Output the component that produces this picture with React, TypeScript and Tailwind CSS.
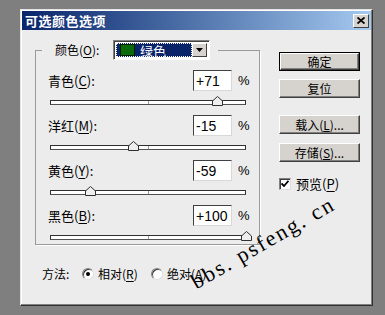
import React from 'react';

const FONT = { fontFamily: '"Noto Sans CJK SC", "Liberation Sans", sans-serif' };

const channels = [
  { name: '青色', key: 'C', value: 71 },
  { name: '洋红', key: 'M', value: -15 },
  { name: '黄色', key: 'Y', value: -59 },
  { name: '黑色', key: 'B', value: 100 },
];

function Hotkey({ label, k, colon = true }: { label: string; k: string; colon?: boolean }) {
  return (
    <span>
      {label}(<span className="underline underline-offset-2">{k}</span>){colon ? ':' : ''}
    </span>
  );
}

function WinButton({ children, isDefault }: { children: React.ReactNode; isDefault?: boolean }) {
  return (
    <div className={`w-[81px] h-[19px] ${isDefault ? 'border border-black' : ''}`}>
      <div className="w-full h-full bg-[#d6d3ce] border border-t-white border-l-white border-r-[#404040] border-b-[#404040] shadow-[inset_-1px_-1px_0_#808080] flex items-center justify-center text-[12px] text-black leading-none">
        {children}
      </div>
    </div>
  );
}

function Slider({ value }: { value: number }) {
  const pos = ((value + 100) / 200) * 196;
  return (
    <div className="relative h-[12px] w-[196px] ml-[2px] mt-[4px]">
      <div className="absolute top-[5px] left-0 w-[196px] h-[5px] bg-white border border-[#303030] border-b-[#505050]">
        <div className="absolute left-[97px] top-0 w-px h-full bg-[#9a9a9a]" />
      </div>
      <svg className="absolute top-[1px]" style={{ left: pos - 5.5 }} width="11" height="10" viewBox="0 0 11 10">
        <polygon points="0.5,9.5 0.5,5 5.5,0.5 10.5,5 10.5,9.5" fill="#eeeeee" stroke="#303030" strokeWidth="1" />
      </svg>
    </div>
  );
}

function Radio({ checked }: { checked?: boolean }) {
  return (
    <div className="w-[12px] h-[12px] rounded-full bg-white border border-t-[#808080] border-l-[#808080] border-r-[#e0e0e0] border-b-[#e0e0e0] shadow-[inset_1px_1px_0_#404040] flex items-center justify-center">
      {checked && <div className="w-[4px] h-[4px] rounded-full bg-black" />}
    </div>
  );
}

export default function App() {
  return (
    <div className="relative w-[385px] h-[315px] overflow-hidden bg-[#7f7f7f] pl-[20px] pt-[9px]" style={FONT}>
      <div className="w-[353px] h-[297px] bg-[#ececec] border border-t-[#e4e4e4] border-l-[#e4e4e4] border-r-[#303030] border-b-[#303030] shadow-[inset_-1px_-1px_0_#808080,inset_1px_1px_0_#ffffff] p-[1px]">
        <div className="h-[19px] bg-gradient-to-r from-[#0a246a] to-[#a6caf0] flex items-center justify-between pl-[3px] pr-[2px]">
          <span className="text-white font-bold text-[13px] leading-none tracking-[0.5px]">可选颜色选项</span>
          <div className="w-[16px] h-[14px] bg-[#d6d3ce] border border-t-white border-l-white border-r-[#404040] border-b-[#404040] flex items-center justify-center">
            <svg width="8" height="7" viewBox="0 0 8 7">
              <path d="M0.5 0.5 L7.5 6.5 M7.5 0.5 L0.5 6.5" stroke="#000" strokeWidth="1.8" />
            </svg>
          </div>
        </div>

        <div className="flex mt-[10px] ml-[13px]">
          <div className="flex flex-col">
            <fieldset className="w-[225px] h-[205px] border border-[#9a9a9a] shadow-[1px_1px_0_#ffffff] pl-[12px]">
              <legend className="-ml-[6px] pl-[13px] pr-[8px] flex items-center h-[20px]">
                <span className="w-[58px] text-[12px] text-black leading-none">
                  <Hotkey label="颜色" k="O" />
                </span>
                <div className="w-[97px] h-[20px] bg-white border border-t-[#808080] border-l-[#808080] border-r-white border-b-white shadow-[inset_1px_1px_0_#404040] flex items-center p-[2px]">
                  <div className="flex-1 h-full bg-[#0a246a] border border-dotted border-white flex items-center pl-[3px]">
                    <div className="w-[15px] h-[12px] bg-[#0b6b0b] border border-[#002000]" />
                    <span className="ml-[5px] text-white text-[13px] leading-none">绿色</span>
                  </div>
                  <div className="w-[15px] h-full bg-[#d6d3ce] border border-t-white border-l-white border-r-[#404040] border-b-[#404040] flex items-center justify-center">
                    <svg width="7" height="4" viewBox="0 0 7 4">
                      <polygon points="0,0 7,0 3.5,4" fill="#000" />
                    </svg>
                  </div>
                </div>
              </legend>

              <div className="mt-[10px]">
                {channels.map(c => (
                  <div key={c.key} className="h-[45px]">
                    <div className="flex items-center h-[21px]">
                      <span className="w-[145px] text-[13px] text-black leading-none">
                        <Hotkey label={c.name} k={c.key} />
                      </span>
                      <div className="w-[39px] h-[21px] bg-white border border-t-[#404040] border-l-[#404040] border-r-[#d8d8d8] border-b-[#d8d8d8] flex items-center pl-[2px] text-[14px] text-black leading-none" style={{ fontFamily: '"Liberation Sans", sans-serif' }}>
                        {c.value > 0 ? `+${c.value}` : c.value}
                      </div>
                      <span className="ml-[6px] text-[13px] text-black leading-none" style={{ fontFamily: '"Liberation Sans", sans-serif' }}>%</span>
                    </div>
                    <Slider value={c.value} />
                  </div>
                ))}
              </div>
            </fieldset>

            <div className="flex items-center mt-[22px] ml-[7px] h-[14px] text-[12px] text-black leading-none">
              <span className="w-[40px]">方法:</span>
              <Radio checked />
              <span className="ml-[4px] w-[53px]"><Hotkey label="相对" k="R" colon={false} /></span>
              <Radio />
              <span className="ml-[4px]"><Hotkey label="绝对" k="A" colon={false} /></span>
            </div>
          </div>

          <div className="ml-[19px] mt-[12px] flex flex-col">
            <WinButton isDefault>确定</WinButton>
            <div className="mt-[8px]"><WinButton>复位</WinButton></div>
            <div className="mt-[17px]"><WinButton>载入(<span className="underline">L</span>)...</WinButton></div>
            <div className="mt-[9px]"><WinButton>存储(<span className="underline">S</span>)...</WinButton></div>
            <div className="mt-[15px] flex items-center text-[13px] text-black leading-none">
              <div className="w-[12px] h-[12px] bg-white border border-t-[#808080] border-l-[#808080] border-r-[#e0e0e0] border-b-[#e0e0e0] shadow-[inset_1px_1px_0_#404040] flex items-center justify-center">
                <svg width="8" height="7" viewBox="0 0 8 7">
                  <path d="M0.5 3.5 L3 6 L7.5 0.8" stroke="#000" strokeWidth="1.8" fill="none" />
                </svg>
              </div>
              <span className="ml-[5px]"><Hotkey label="预览" k="P" colon={false} /></span>
            </div>
          </div>
        </div>
      </div>

      <div
        className="absolute left-[263px] top-[243px] -translate-x-1/2 -translate-y-1/2 -rotate-[30deg] whitespace-nowrap text-[22px] tracking-[2px] text-black leading-none"
        style={{ fontFamily: '"Liberation Serif", serif' }}
      >
        bbs. psfeng. cn
      </div>
    </div>
  );
}
